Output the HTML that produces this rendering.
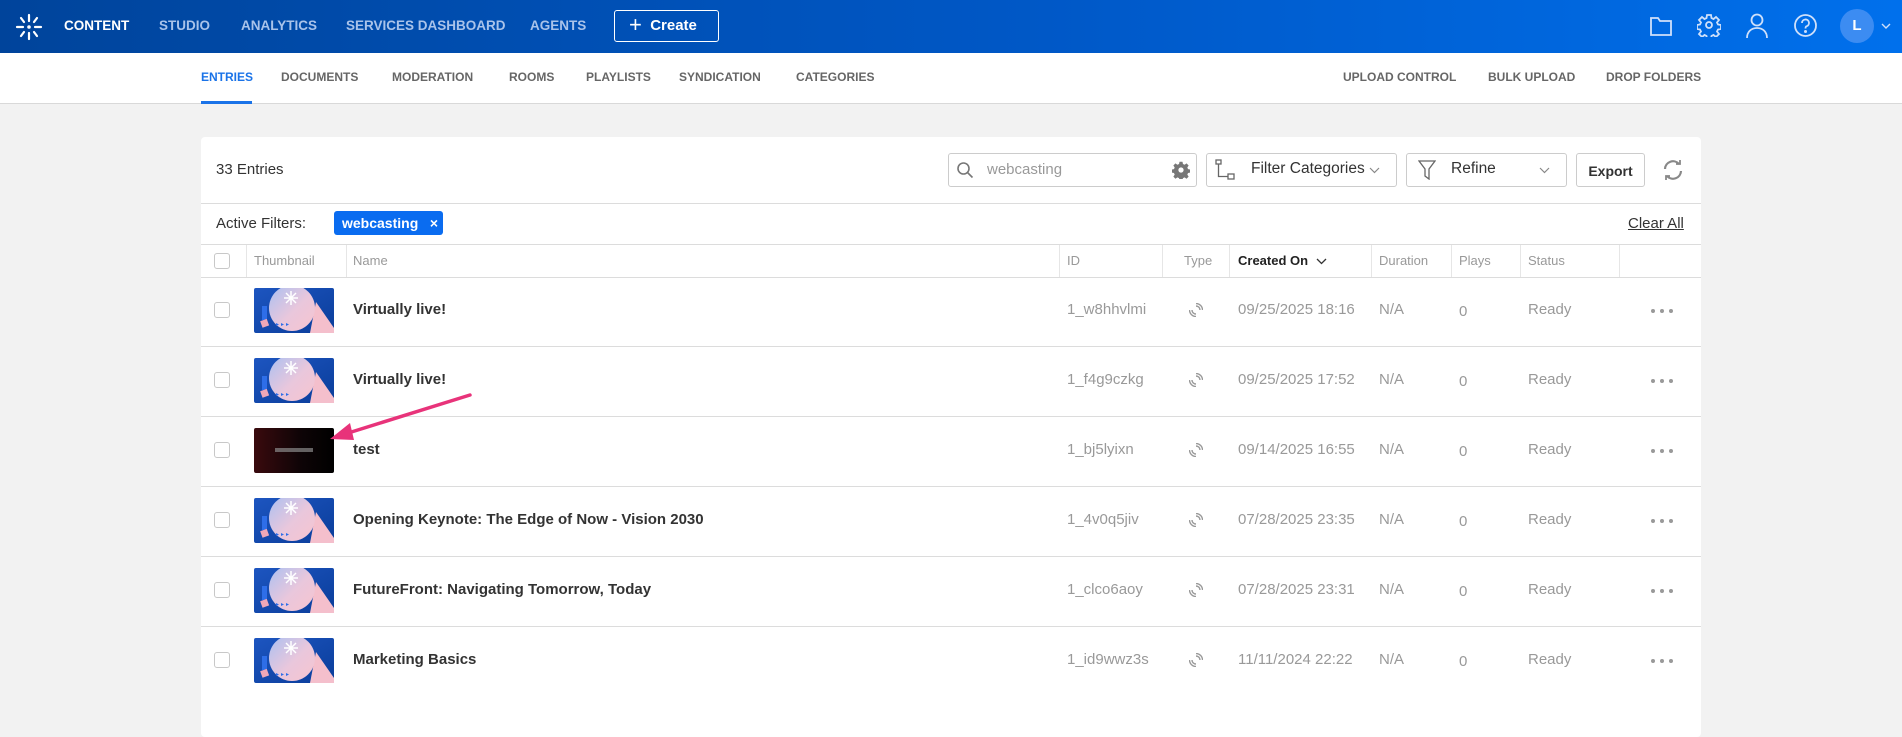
<!DOCTYPE html>
<html><head><meta charset="utf-8"><style>
*{margin:0;padding:0;box-sizing:border-box}
body{width:1902px;height:694px;overflow:hidden;background:#f2f2f2;font-family:"Liberation Sans",sans-serif;position:relative}
.a{position:absolute;white-space:nowrap}
.hdr{position:absolute;left:0;top:0;width:1902px;height:53px;background:linear-gradient(90deg,#00449b 0%,#0058c7 55%,#0070ec 100%)}
.nv{top:18px;font-size:13.5px;font-weight:bold;color:#a9c3ea}
.sub{position:absolute;left:0;top:53px;width:1902px;height:51px;background:#fff;border-bottom:1px solid #d9d9d9}
.sn{top:70px;font-size:12px;font-weight:bold;color:#666}
.card{position:absolute;left:201px;top:137px;width:1500px;height:600px;background:#fff;border-radius:4px}
.hl{position:absolute;left:201px;width:1500px;height:1px;background:#dcdcdc}
.th{top:253px;font-size:13px;color:#999}
.vl{position:absolute;top:245px;width:1px;height:32px;background:#e6e6e6}
.cb{position:absolute;left:214px;width:16px;height:16px;border:1px solid #c8c8c8;border-radius:3px;background:#fff}
.nm{font-size:15px;font-weight:bold;color:#333}
.g{font-size:15px;color:#999}
.dt{position:absolute;left:1651px;width:24px;height:4px}
.dt i{position:absolute;top:0;width:4px;height:4px;border-radius:50%;background:#999}
.btn{position:absolute;border:1px solid #ccc;border-radius:3px;background:#fff;height:34px;top:153px}
</style></head><body>
<div class="hdr"></div>
<svg class="a" style="left:15px;top:13px" width="28" height="28" viewBox="0 0 28 28" stroke="#fff" stroke-width="2.2" stroke-linecap="round">
<circle cx="14" cy="14" r="1.8" fill="#fff" stroke="none"/>
<line x1="14" y1="2" x2="14" y2="8"/><line x1="14" y1="20" x2="14" y2="26"/>
<line x1="2" y1="14" x2="8" y2="14"/><line x1="20" y1="14" x2="26" y2="14"/>
<line x1="6" y1="5" x2="9" y2="9"/><line x1="22" y1="5" x2="19" y2="9"/>
<line x1="6" y1="23" x2="9" y2="19"/><line x1="22" y1="23" x2="19" y2="19"/></svg>
<div class="a nv" style="left:64px;color:#fff">CONTENT</div>
<div class="a nv" style="left:159px">STUDIO</div>
<div class="a nv" style="left:241px">ANALYTICS</div>
<div class="a nv" style="left:346px">SERVICES DASHBOARD</div>
<div class="a nv" style="left:530px">AGENTS</div>
<div class="a" style="left:614px;top:10px;width:105px;height:32px;border:1.5px solid #fff;border-radius:3px;color:#fff;font-size:15px;font-weight:bold;padding:6px 0 0 14px"><span style="font-size:22px;font-weight:normal;position:relative;top:2px;line-height:10px">+</span>&nbsp; Create</div>
<svg class="a" style="left:1649px;top:14px" width="24" height="24" viewBox="0 0 24 24" fill="none" stroke="#cfe0fa" stroke-width="1.8"><path d="M2 4h7l2 3h11v14H2z"/></svg>
<svg class="a" style="left:1697px;top:13px" width="24" height="24" viewBox="0 0 24 24" fill="none" stroke="#cfe0fa" stroke-width="1.8"><circle cx="12" cy="12" r="3"/><path d="M10 2h4l.5 3 2 1 2.5-2 3 3-2 2.5 1 2 3 .5v4l-3 .5-1 2 2 2.5-3 3-2.5-2-2 1-.5 3h-4l-.5-3-2-1-2.5 2-3-3 2-2.5-1-2-3-.5v-4l3-.5 1-2-2-2.5 3-3 2.5 2 2-1z"/></svg>
<svg class="a" style="left:1745px;top:12px" width="24" height="28" viewBox="0 0 24 28" fill="none" stroke="#cfe0fa" stroke-width="1.8"><circle cx="12" cy="8" r="5.5"/><path d="M2 26c0-6 4-10 10-10s10 4 10 10"/></svg>
<svg class="a" style="left:1793px;top:13px" width="25" height="25" viewBox="0 0 25 25" fill="none" stroke="#cfe0fa" stroke-width="1.8"><circle cx="12.5" cy="12.5" r="10.5"/><path d="M9 10a3.5 3.5 0 1 1 4.5 3.3c-1 .4-1 1-1 2.2"/><circle cx="12.5" cy="18.5" r=".6" fill="#cfe0fa"/></svg>
<div class="a" style="left:1840px;top:9px;width:34px;height:34px;border-radius:50%;background:#3c8cf2;color:#fff;font-weight:bold;font-size:15px;text-align:center;line-height:34px">L</div>
<svg class="a" style="left:1881px;top:22px" width="10" height="8" viewBox="0 0 10 8" fill="none" stroke="#cfe0fa" stroke-width="1.4"><path d="M1 2l4 4 4-4"/></svg>

<div class="sub"></div>
<div class="a sn" style="left:201px;color:#1a73e8">ENTRIES</div>
<div class="a" style="left:201px;top:101px;width:51px;height:3px;background:#1a73e8"></div>
<div class="a sn" style="left:281px">DOCUMENTS</div>
<div class="a sn" style="left:392px">MODERATION</div>
<div class="a sn" style="left:509px">ROOMS</div>
<div class="a sn" style="left:586px">PLAYLISTS</div>
<div class="a sn" style="left:679px">SYNDICATION</div>
<div class="a sn" style="left:796px">CATEGORIES</div>
<div class="a sn" style="left:1343px">UPLOAD CONTROL</div>
<div class="a sn" style="left:1488px">BULK UPLOAD</div>
<div class="a sn" style="left:1606px">DROP FOLDERS</div>

<div class="card"></div>
<div class="a" style="left:216px;top:161px;font-size:15px;color:#333">33 Entries</div>
<div class="btn" style="left:948px;width:249px"></div>
<svg class="a" style="left:956px;top:161px" width="18" height="18" viewBox="0 0 18 18" fill="none" stroke="#777" stroke-width="1.6"><circle cx="7.5" cy="7.5" r="5.5"/><path d="M11.5 11.5l5 5"/></svg>
<div class="a" style="left:987px;top:161px;font-size:15px;color:#999">webcasting</div>
<svg class="a" style="left:1172px;top:161px" width="18" height="18" viewBox="0 0 24 24" fill="#777"><path d="M10 1h4l.6 3 2.2 1 2.6-1.8 2.8 2.8-1.8 2.6 1 2.2 3 .6v4l-3 .6-1 2.2 1.8 2.6-2.8 2.8-2.6-1.8-2.2 1-.6 3h-4l-.6-3-2.2-1-2.6 1.8-2.8-2.8 1.8-2.6-1-2.2-3-.6v-4l3-.6 1-2.2-1.8-2.6 2.8-2.8 2.6 1.8 2.2-1z"/><circle cx="12" cy="12" r="3.5" fill="#fff"/></svg>
<div class="btn" style="left:1206px;width:191px"></div>
<svg class="a" style="left:1215px;top:159px" width="22" height="22" viewBox="0 0 22 22" fill="none" stroke="#666" stroke-width="1.3"><rect x="1" y="1" width="5" height="4"/><rect x="13" y="15" width="6" height="5"/><path d="M3.5 5v12.5h9.5"/></svg>
<div class="a" style="left:1251px;top:160px;font-size:15.5px;color:#333">Filter Categories</div>
<svg class="a" style="left:1369px;top:167px" width="11" height="7" viewBox="0 0 11 7" fill="none" stroke="#888" stroke-width="1.2"><path d="M1 1l4.5 4.5L10 1"/></svg>
<div class="btn" style="left:1406px;width:161px"></div>
<svg class="a" style="left:1418px;top:160px" width="18" height="20" viewBox="0 0 18 20" fill="none" stroke="#666" stroke-width="1.3"><path d="M1 1h16l-6 8v10l-4-3V9z"/></svg>
<div class="a" style="left:1451px;top:160px;font-size:15.5px;color:#333">Refine</div>
<svg class="a" style="left:1539px;top:167px" width="11" height="7" viewBox="0 0 11 7" fill="none" stroke="#888" stroke-width="1.2"><path d="M1 1l4.5 4.5L10 1"/></svg>
<div class="btn" style="left:1576px;width:69px;text-align:center;font-size:14px;font-weight:bold;color:#333;padding-top:9px">Export</div>
<svg class="a" style="left:1661px;top:158px" width="24" height="24" viewBox="0 0 24 24" fill="none" stroke="#888" stroke-width="2.2"><path d="M4 11a8 8 0 0 1 14-5"/><path d="M20 13a8 8 0 0 1-14 5"/><path d="M15 6h4V2" stroke-width="1.8"/><path d="M9 18H5v4" stroke-width="1.8"/></svg>

<div class="hl" style="top:203px"></div>
<div class="a" style="left:216px;top:215px;font-size:15px;color:#333">Active Filters:</div>
<div class="a" style="left:334px;top:211px;width:109px;height:24px;background:#0a6cf0;border-radius:3px;color:#fff;font-size:14px;font-weight:bold;padding:4px 0 0 8px">webcasting&nbsp;&nbsp;&nbsp;×</div>
<div class="a" style="left:1628px;top:215px;font-size:15px;color:#333;text-decoration:underline">Clear All</div>
<div class="hl" style="top:244px"></div>
<div class="cb" style="top:253px"></div>
<div class="vl" style="left:246px"></div><div class="vl" style="left:346px"></div><div class="vl" style="left:1059px"></div><div class="vl" style="left:1162px"></div><div class="vl" style="left:1229px"></div><div class="vl" style="left:1371px"></div><div class="vl" style="left:1451px"></div><div class="vl" style="left:1520px"></div><div class="vl" style="left:1619px"></div>
<div class="a th" style="left:254px">Thumbnail</div>
<div class="a th" style="left:353px">Name</div>
<div class="a th" style="left:1067px">ID</div>
<div class="a th" style="left:1184px">Type</div>
<div class="a th" style="left:1238px;color:#222;font-weight:bold">Created On</div>
<svg class="a" style="left:1316px;top:258px" width="11" height="7" viewBox="0 0 11 7" fill="none" stroke="#333" stroke-width="1.3"><path d="M1 1l4.5 4.5L10 1"/></svg>
<div class="a th" style="left:1379px">Duration</div>
<div class="a th" style="left:1459px">Plays</div>
<div class="a th" style="left:1528px">Status</div>
<div class="hl" style="top:277px"></div>

<svg width="0" height="0" style="position:absolute"><defs>
<linearGradient id="bg" x1="0" y1="0" x2="1" y2="1"><stop offset="0" stop-color="#1d55c0"/><stop offset="1" stop-color="#0a3d9a"/></linearGradient>
<linearGradient id="ci" x1="0" y1="0" x2="1" y2="1"><stop offset="0" stop-color="#a9c0f2"/><stop offset=".55" stop-color="#e9c7dc"/><stop offset="1" stop-color="#f7c4cf"/></linearGradient>
<symbol id="th" viewBox="0 0 80 45"><rect width="80" height="45" rx="2" fill="url(#bg)"/><path d="M62 14 L80 40 V45 H56z" fill="#f4bfcc"/><circle cx="38" cy="20" r="23" fill="url(#ci)"/><rect x="8" y="18" width="5" height="14" fill="#2e6ee8"/><rect x="7" y="32" width="7" height="7" fill="#f0a8b8" transform="rotate(-20 10 35)"/><g stroke="#fff" stroke-width="1.5"><line x1="37" y1="3" x2="37" y2="17"/><line x1="30" y1="10" x2="44" y2="10"/><line x1="32" y1="5" x2="42" y2="15"/><line x1="42" y1="5" x2="32" y2="15"/></g><g fill="#2e6ee8"><path d="M22 35l3 1.5-3 1.5z"/><path d="M27 35l3 1.5-3 1.5z"/><path d="M32 35l3 1.5-3 1.5z"/></g></symbol>
<symbol id="ty" viewBox="0 0 14 14"><g fill="none" stroke="#999" stroke-width="1.4"><path d="M7 3a4 4 0 0 1 4 4M7 0.5a6.5 6.5 0 0 1 6.5 6.5"/><path d="M7 11a4 4 0 0 1-4-4M7 13.5A6.5 6.5 0 0 1 .5 7"/></g></symbol>
</defs></svg>

<div class="cb" style="top:302px"></div><svg class="a" style="left:254px;top:288px" width="80" height="45"><use href="#th"/></svg>
<div class="a nm" style="left:353px;top:301px">Virtually live!</div><div class="a g" style="left:1067px;top:301px">1_w8hhvlmi</div><svg class="a" style="left:1189px;top:303px" width="14" height="14"><use href="#ty"/></svg><div class="a g" style="left:1238px;top:301px">09/25/2025 18:16</div><div class="a g" style="left:1379px;top:301px">N/A</div><div class="a g" style="left:1459px;top:303px">0</div><div class="a g" style="left:1528px;top:301px">Ready</div><div class="dt" style="top:309px"><i style="left:0"></i><i style="left:9px"></i><i style="left:18px"></i></div>
<div class="hl" style="top:346px"></div>

<div class="cb" style="top:372px"></div><svg class="a" style="left:254px;top:358px" width="80" height="45"><use href="#th"/></svg>
<div class="a nm" style="left:353px;top:371px">Virtually live!</div><div class="a g" style="left:1067px;top:371px">1_f4g9czkg</div><svg class="a" style="left:1189px;top:373px" width="14" height="14"><use href="#ty"/></svg><div class="a g" style="left:1238px;top:371px">09/25/2025 17:52</div><div class="a g" style="left:1379px;top:371px">N/A</div><div class="a g" style="left:1459px;top:373px">0</div><div class="a g" style="left:1528px;top:371px">Ready</div><div class="dt" style="top:379px"><i style="left:0"></i><i style="left:9px"></i><i style="left:18px"></i></div>
<div class="hl" style="top:416px"></div>

<div class="cb" style="top:442px"></div><div class="a" style="left:254px;top:428px;width:80px;height:45px;border-radius:2px;background:linear-gradient(90deg,#3a0a0e,#0d0406 60%,#000)"><div style="position:absolute;left:21px;top:20px;width:38px;height:4px;background:#8a8a8a;opacity:.7"></div></div>
<div class="a nm" style="left:353px;top:441px">test</div><div class="a g" style="left:1067px;top:441px">1_bj5lyixn</div><svg class="a" style="left:1189px;top:443px" width="14" height="14"><use href="#ty"/></svg><div class="a g" style="left:1238px;top:441px">09/14/2025 16:55</div><div class="a g" style="left:1379px;top:441px">N/A</div><div class="a g" style="left:1459px;top:443px">0</div><div class="a g" style="left:1528px;top:441px">Ready</div><div class="dt" style="top:449px"><i style="left:0"></i><i style="left:9px"></i><i style="left:18px"></i></div>
<div class="hl" style="top:486px"></div>

<div class="cb" style="top:512px"></div><svg class="a" style="left:254px;top:498px" width="80" height="45"><use href="#th"/></svg>
<div class="a nm" style="left:353px;top:511px">Opening Keynote: The Edge of Now - Vision 2030</div><div class="a g" style="left:1067px;top:511px">1_4v0q5jiv</div><svg class="a" style="left:1189px;top:513px" width="14" height="14"><use href="#ty"/></svg><div class="a g" style="left:1238px;top:511px">07/28/2025 23:35</div><div class="a g" style="left:1379px;top:511px">N/A</div><div class="a g" style="left:1459px;top:513px">0</div><div class="a g" style="left:1528px;top:511px">Ready</div><div class="dt" style="top:519px"><i style="left:0"></i><i style="left:9px"></i><i style="left:18px"></i></div>
<div class="hl" style="top:556px"></div>

<div class="cb" style="top:582px"></div><svg class="a" style="left:254px;top:568px" width="80" height="45"><use href="#th"/></svg>
<div class="a nm" style="left:353px;top:581px">FutureFront: Navigating Tomorrow, Today</div><div class="a g" style="left:1067px;top:581px">1_clco6aoy</div><svg class="a" style="left:1189px;top:583px" width="14" height="14"><use href="#ty"/></svg><div class="a g" style="left:1238px;top:581px">07/28/2025 23:31</div><div class="a g" style="left:1379px;top:581px">N/A</div><div class="a g" style="left:1459px;top:583px">0</div><div class="a g" style="left:1528px;top:581px">Ready</div><div class="dt" style="top:589px"><i style="left:0"></i><i style="left:9px"></i><i style="left:18px"></i></div>
<div class="hl" style="top:626px"></div>

<div class="cb" style="top:652px"></div><svg class="a" style="left:254px;top:638px" width="80" height="45"><use href="#th"/></svg>
<div class="a nm" style="left:353px;top:651px">Marketing Basics</div><div class="a g" style="left:1067px;top:651px">1_id9wwz3s</div><svg class="a" style="left:1189px;top:653px" width="14" height="14"><use href="#ty"/></svg><div class="a g" style="left:1238px;top:651px">11/11/2024 22:22</div><div class="a g" style="left:1379px;top:651px">N/A</div><div class="a g" style="left:1459px;top:653px">0</div><div class="a g" style="left:1528px;top:651px">Ready</div><div class="dt" style="top:659px"><i style="left:0"></i><i style="left:9px"></i><i style="left:18px"></i></div>

<svg class="a" style="left:320px;top:390px" width="160" height="60" viewBox="0 0 160 60"><line x1="150" y1="5" x2="25" y2="44" stroke="#e8337a" stroke-width="3.5" stroke-linecap="round"/><path d="M10 49 L30 33 L34 50z" fill="#e8337a"/></svg>
</body></html>
